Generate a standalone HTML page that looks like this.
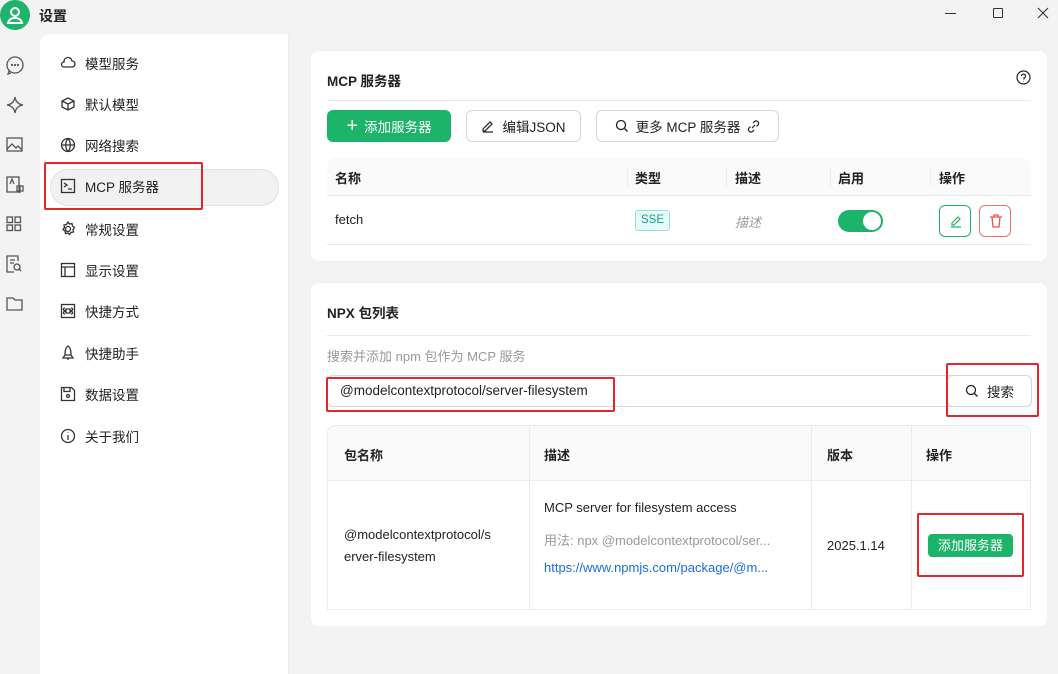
<!DOCTYPE html>
<html><head><meta charset="utf-8"><style>
*{box-sizing:border-box;margin:0;padding:0}
body{width:1058px;height:661px;background:#f3f3f3;font-family:"Liberation Sans","Noto Sans CJK SC",sans-serif;font-size:13px;color:#222;position:relative;overflow:hidden}
.abs{position:absolute}
.ico{position:absolute;stroke:#555;fill:none;stroke-width:1.3}
.menu{position:absolute;left:40px;top:34px;width:249px;height:640px;background:#fff;border-top-left-radius:10px;border-right:1px solid #ececec}
.mi{position:absolute;left:20px;height:36px;display:flex;align-items:center;font-size:13.5px;color:#222}
.mi svg{width:16px;height:16px;margin-right:9px;stroke:#333;fill:none;stroke-width:1.3}
.card{position:absolute;left:311px;width:736px;background:#fff;border-radius:8px}
.title{position:absolute;left:16px;font-weight:bold;font-size:13.5px}
.hr{position:absolute;left:16px;right:16px;height:1px;background:#e8e8e8}
.btn{position:absolute;height:32px;border:1px solid #d6d6d6;border-radius:6px;display:flex;align-items:center;justify-content:center;font-size:13.5px;background:#fff}
.red{position:absolute;border:2px solid #e3262a;border-radius:2px}
</style></head><body>
<!-- top bar -->
<div class="abs" style="left:0;top:0;width:30px;height:30px;border-radius:50%;background:#1fb36b"></div>
<svg class="abs" style="left:5px;top:4px" width="20" height="22" viewBox="0 0 20 22" fill="none" stroke="#fff" stroke-width="2"><circle cx="10" cy="8" r="4"/><path d="M3 19c1-4 4-5 7-5s6 1 7 5z"/></svg>
<div class="abs" style="left:39px;top:6px;font-size:14px;font-weight:bold">设置</div>
<div class="abs" style="left:945px;top:13px;width:11px;height:1px;background:#333"></div>
<div class="abs" style="left:993px;top:8px;width:10px;height:10px;border:1px solid #333;border-radius:1px"></div>
<svg class="abs" style="left:1037px;top:7px" width="12" height="12" stroke="#333" stroke-width="1.1"><path d="M1 1L11 11M11 1L1 11"/></svg>
<!-- left icon rail -->
<svg class="ico" style="left:5px;top:55px" width="20" height="20"><circle cx="10" cy="10" r="8"/><path d="M4 16l-1 3 3-1"/><circle cx="7" cy="10" r=".5"/><circle cx="10" cy="10" r=".5"/><circle cx="13" cy="10" r=".5"/></svg>
<svg class="ico" style="left:5px;top:95px" width="20" height="20"><path d="M10 2Q11 9 18 10Q11 11 10 18Q9 11 2 10Q9 9 10 2z"/></svg>
<svg class="ico" style="left:6px;top:137px" width="18" height="16"><rect x="1" y="1" width="15" height="13"/><path d="M1 12l5-5 4 4 2-2 4 4"/></svg>
<svg class="ico" style="left:6px;top:176px" width="18" height="18"><rect x="1" y="1" width="12" height="15"/><path d="M4 8l2-5 2 5M11 10h6v5h-6zM14 9v8"/></svg>
<svg class="ico" style="left:6px;top:216px" width="16" height="16"><rect x="1" y="1" width="5.5" height="5.5"/><rect x="9" y="1" width="5.5" height="5.5"/><rect x="1" y="9" width="5.5" height="5.5"/><rect x="9" y="9" width="5.5" height="5.5"/></svg>
<svg class="ico" style="left:6px;top:255px" width="16" height="18"><path d="M12 6V1H1v16h7M4 5h5M4 8h4"/><circle cx="11" cy="12" r="3"/><path d="M13 14l2 2"/></svg>
<svg class="ico" style="left:6px;top:296px" width="18" height="16"><path d="M1 2h6l2 2h7v10H1z"/></svg>
<!-- settings menu -->
<div class="menu"></div>
<div class="abs" style="left:50px;top:169px;width:229px;height:37px;background:#f1f1f1;border:1px solid #e2e2e2;border-radius:18px"></div>
<div class="abs" style="left:40px;top:34px;width:249px">
<div class="mi" style="top:11px"><svg viewBox="0 0 16 16"><path d="M4 12h8a3 3 0 0 0 0-6 4 4 0 0 0-8 1 2.5 2.5 0 0 0 0 5z"/></svg>模型服务</div>
<div class="mi" style="top:52px"><svg viewBox="0 0 16 16"><path d="M8 2l6 3v6l-6 3-6-3V5zM2 5l6 3 6-3M8 8v6"/></svg>默认模型</div>
<div class="mi" style="top:93px"><svg viewBox="0 0 16 16"><circle cx="8" cy="8" r="6.5"/><path d="M1.5 8h13M8 1.5c-3 3-3 10 0 13M8 1.5c3 3 3 10 0 13"/></svg>网络搜索</div>
<div class="mi" style="top:134px"><svg viewBox="0 0 16 16"><rect x="1.5" y="1.5" width="13" height="13"/><path d="M4 5l3 2-3 2M8 11h4"/></svg>MCP 服务器</div>
<div class="mi" style="top:177px"><svg viewBox="0 0 16 16"><circle cx="8" cy="8" r="2.5"/><path d="M8 1l1.5 2 2.5-.5.5 2.5 2 1.5-1.5 2 .5 2.5-2.5.5-1.5 2-1.5-1.5-2.5.5-.5-2.5-2-1.5 1.5-2-.5-2.5 2.5-.5z"/></svg>常规设置</div>
<div class="mi" style="top:218px"><svg viewBox="0 0 16 16"><rect x="1.5" y="1.5" width="13" height="13"/><path d="M1.5 5h13M5 5v9.5"/></svg>显示设置</div>
<div class="mi" style="top:259px"><svg viewBox="0 0 16 16"><rect x="1.5" y="1.5" width="13" height="13"/><path d="M6 6h4v4H6zM6 6a1.3 1.3 0 1 1-1-1M10 6a1.3 1.3 0 1 0 1-1M6 10a1.3 1.3 0 1 0-1 1M10 10a1.3 1.3 0 1 1 1 1"/></svg>快捷方式</div>
<div class="mi" style="top:301px"><svg viewBox="0 0 16 16"><path d="M8 1c-3 2-3 6-3 9h6c0-3 0-7-3-9zM5 10l-2 3h10l-2-3M7 14h2"/></svg>快捷助手</div>
<div class="mi" style="top:342px"><svg viewBox="0 0 16 16"><path d="M1.5 1.5h10l3 3v10h-13z"/><path d="M4 1.5v4h6v-4"/><circle cx="8" cy="10" r="1.5"/></svg>数据设置</div>
<div class="mi" style="top:384px"><svg viewBox="0 0 16 16"><circle cx="8" cy="8" r="6.5"/><path d="M8 7v5M8 4.5v.5"/></svg>关于我们</div>
</div>
<div class="red" style="left:44px;top:162px;width:159px;height:48px"></div>
<!-- card 1 -->
<div class="card" style="top:51px;height:210px">
<div class="title" style="top:19px">MCP 服务器</div>
<svg class="abs" style="left:705px;top:19px" width="15" height="15" fill="none" stroke="#222" stroke-width="1.2"><circle cx="7.5" cy="7.5" r="6.5"/><path d="M5.5 6a2 2 0 1 1 2.5 2v1.5M7.5 11v.5"/></svg>
<div class="hr" style="top:49px"></div>
<div class="btn" style="left:16px;top:59px;width:124px;background:#1cb469;border-color:#1cb469;color:#fff"><span style="font-size:20px;font-weight:300;margin-right:6px;line-height:1">+</span>添加服务器</div>
<div class="btn" style="left:155px;top:59px;width:115px"><svg width="14" height="14" fill="none" stroke="#222" stroke-width="1.2" style="margin-right:7px"><path d="M2 10l7-7 2 2-7 7H2zM2 13h10"/></svg>编辑JSON</div>
<div class="btn" style="left:285px;top:59px;width:183px"><svg width="14" height="14" fill="none" stroke="#222" stroke-width="1.3" style="margin-right:7px"><circle cx="6" cy="6" r="4.5"/><path d="M9.5 9.5l3 3"/></svg>更多 MCP 服务器<svg width="13" height="13" fill="none" stroke="#222" stroke-width="1.2" style="margin-left:7px"><path d="M5 8l3-3M6 3l1.5-1.5a2.5 2.5 0 0 1 3.5 3.5L9.5 6.5M7 10l-1.5 1.5a2.5 2.5 0 0 1-3.5-3.5L3.5 6.5"/></svg></div>
<div class="abs" style="left:16px;top:107px;width:704px;height:38px;background:#fafafa;border-radius:8px 8px 0 0;border-bottom:1px solid #ebebeb"></div>
<div class="abs" style="left:24px;top:117px;font-weight:bold">名称</div>
<div class="abs" style="left:324px;top:117px;font-weight:bold">类型</div>
<div class="abs" style="left:424px;top:117px;font-weight:bold">描述</div>
<div class="abs" style="left:527px;top:117px;font-weight:bold">启用</div>
<div class="abs" style="left:628px;top:117px;font-weight:bold">操作</div>
<div class="abs" style="left:316px;top:116px;width:1px;height:20px;background:#eee"></div>
<div class="abs" style="left:415px;top:116px;width:1px;height:20px;background:#eee"></div>
<div class="abs" style="left:519px;top:116px;width:1px;height:20px;background:#eee"></div>
<div class="abs" style="left:619px;top:116px;width:1px;height:20px;background:#eee"></div>
<div class="abs" style="left:24px;top:161px">fetch</div>
<div class="abs" style="left:324px;top:159px;width:35px;height:21px;background:#e6fbf7;border:1px solid #8fe6d6;border-radius:3px;color:#15a58c;font-size:11.5px;text-align:center;line-height:19px">SSE</div>
<div class="abs" style="left:424px;top:161px;color:#999;font-style:italic">描述</div>
<div class="abs" style="left:527px;top:159px;width:45px;height:22px;border-radius:11px;background:#1cb469"><div class="abs" style="right:2px;top:2px;width:18px;height:18px;border-radius:50%;background:#fff"></div></div>
<div class="abs" style="left:628px;top:154px;width:32px;height:32px;border:1px solid #1cb469;border-radius:6px"><svg class="abs" style="left:9px;top:8px" width="14" height="14" fill="none" stroke="#1cb469" stroke-width="1.2"><path d="M3 9l6-6 2 2-6 6H3zM2 13h10"/></svg></div>
<div class="abs" style="left:668px;top:154px;width:32px;height:32px;border:1px solid #f07070;border-radius:6px"><svg class="abs" style="left:9px;top:8px" width="14" height="15" fill="none" stroke="#ef5050" stroke-width="1.3"><path d="M1 3h12M5 3V1h4v2M3 3l1 10h6l1-10"/></svg></div>
<div class="hr" style="top:193px"></div>
</div>
<!-- card 2 -->
<div class="card" style="top:283px;height:343px">
<div class="title" style="top:19px">NPX 包列表</div>
<div class="hr" style="top:52px"></div>
<div class="abs" style="left:16px;top:63px;color:#999;font-size:13px">搜索并添加 npm 包作为 MCP 服务</div>
<div class="abs" style="left:16px;top:92px;width:705px;height:32px;border:1px solid #d9d9d9;border-radius:6px"></div>
<div class="abs" style="left:29px;top:100px;font-size:13.5px">@modelcontextprotocol/server-filesystem</div>
<div class="btn" style="left:636px;top:92px;width:85px"><svg width="14" height="14" fill="none" stroke="#222" stroke-width="1.3" style="margin-right:8px"><circle cx="6" cy="6" r="4.5"/><path d="M9.5 9.5l3 3"/></svg>搜索</div>
<div class="abs" style="left:16px;top:142px;width:704px;height:185px;border:1px solid #ebebeb;border-radius:8px 8px 0 0;overflow:hidden">
<div class="abs" style="left:0;top:0;width:704px;height:55px;background:#fafafa;border-bottom:1px solid #ebebeb"></div>
<div class="abs" style="left:201px;top:0;width:1px;height:185px;background:#ebebeb"></div>
<div class="abs" style="left:483px;top:0;width:1px;height:185px;background:#ebebeb"></div>
<div class="abs" style="left:583px;top:0;width:1px;height:185px;background:#ebebeb"></div>
<div class="abs" style="left:16px;top:19px;font-weight:bold">包名称</div>
<div class="abs" style="left:216px;top:19px;font-weight:bold">描述</div>
<div class="abs" style="left:499px;top:19px;font-weight:bold">版本</div>
<div class="abs" style="left:598px;top:19px;font-weight:bold">操作</div>
<div class="abs" style="left:16px;top:98px;line-height:22px;font-size:13px">@modelcontextprotocol/s<br>erver-filesystem</div>
<div class="abs" style="left:216px;top:74px;font-size:13px">MCP server for filesystem access</div>
<div class="abs" style="left:216px;top:104px;font-size:13px;color:#999">用法: npx @modelcontextprotocol/ser...</div>
<div class="abs" style="left:216px;top:134px;font-size:13px;color:#1a6dde">https://www.npmjs.com/package/@m...</div>
<div class="abs" style="left:499px;top:112px">2025.1.14</div>
<div class="abs" style="left:600px;top:108px;width:85px;height:23px;background:#1cb469;border-radius:4px;color:#fff;text-align:center;line-height:23px;font-size:13px">添加服务器</div>
</div>
<div class="abs" style="left:16px;top:326px;width:704px;height:1px;background:#ebebeb"></div>
</div>
<div class="red" style="left:326px;top:377px;width:289px;height:35px"></div>
<div class="red" style="left:946px;top:363px;width:93px;height:54px"></div>
<div class="red" style="left:917px;top:513px;width:107px;height:64px"></div>
</body></html>
